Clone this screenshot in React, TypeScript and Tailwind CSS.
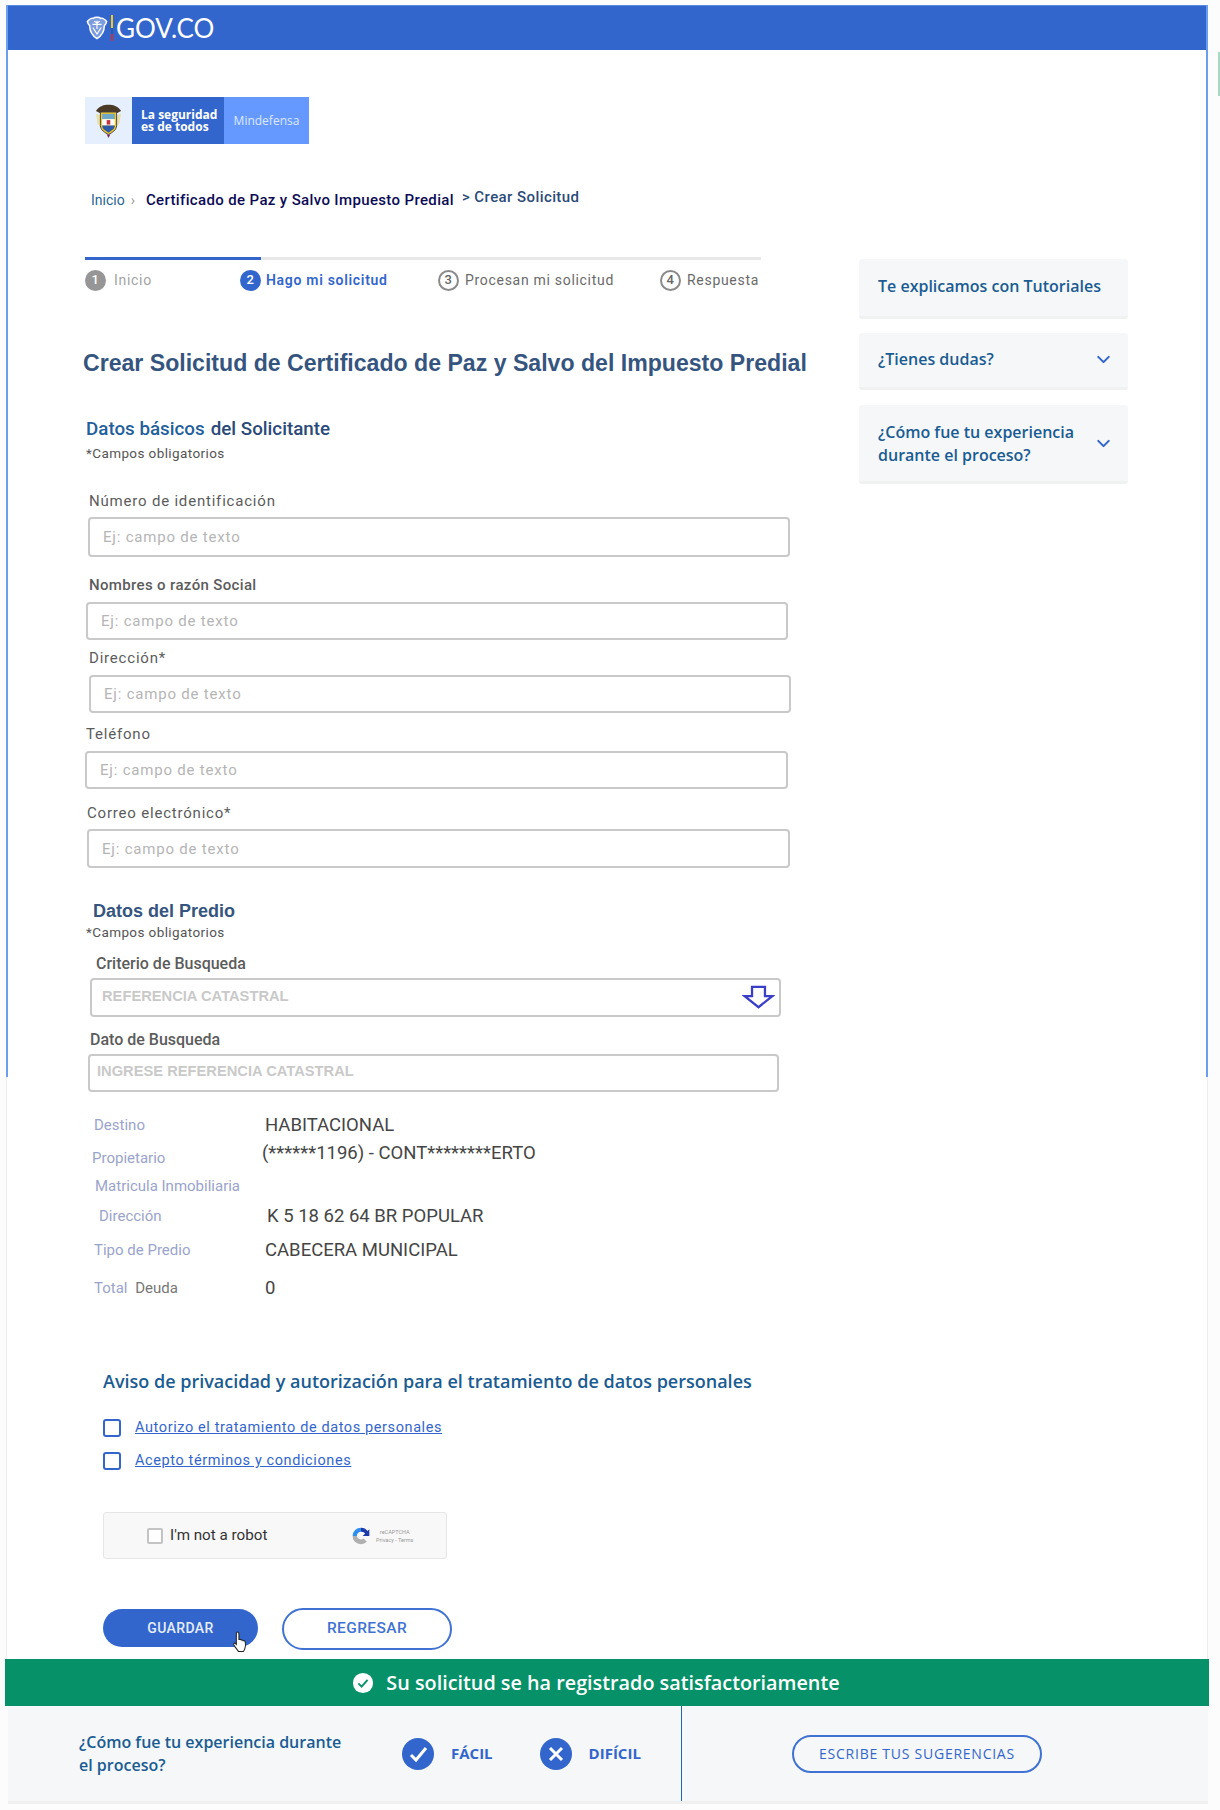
import React from 'react';
import { ChevronDown } from 'lucide-react';

const sans = 'font-["Roboto",sans-serif]';

function Shield({ className = '' }: { className?: string }) {
  return (
    <svg viewBox="0 0 24 26" className={className} fill="none" stroke="#fff">
      <path d="M1.500 6C4 3 6 1.500 8 2.500c1-1.500 7-1.500 8 0C18 1.500 20 3 22.500 6 22 8.500 21 9.500 20 10.500c0 7-4 11.500-8 14-4-2.500-8-7-8-14-1-1-2-2-2.500-4.500z" fill="#e8eef9" fillOpacity="0.4" strokeWidth="1.600" />
      <path d="M7 9h10M7.500 12.500l4.500 7 4.500-7M12 5v9M9 5.500l3 2 3-2" strokeWidth="1.300" />
    </svg>
  );
}

function Crest() {
  return (
    <svg viewBox="0 0 30 40" className="h-[36px] w-[29px]">
      <path d="M1 9c4-6 9-7 14-7s10 1 14 7l-6 3H7z" fill="#4a3a25" />
      <path d="M1 12l5 2v12l-3-3zM29 12l-5 2v12l3-3z" fill="#e8dfa8" />
      <path d="M6 10h18v15c0 5-5 8-9 10-4-2-9-5-9-10z" fill="#f3c71e" stroke="#3a3a55" strokeWidth="1" />
      <rect x="8" y="12" width="14" height="6" fill="#6fa8c8" />
      <rect x="8" y="18" width="14" height="7" fill="#fff" />
      <path d="M13 19h4v5h-4z" fill="#c8303a" />
      <path d="M8 25h14c0 4-4 6-7 8-3-2-7-4-7-8z" fill="#2d5aa8" />
      <path d="M13 35l2 4 2-4z" fill="#7a2a50" />
    </svg>
  );
}

function StepBadge({ n, variant }: { n: number; variant: 'done' | 'active' | 'idle' }) {
  const tone =
    variant === 'done'
      ? 'bg-[#969696] text-white'
      : variant === 'active'
        ? 'bg-[#3366cc] text-white'
        : 'border-2 border-[#8a8a8a] text-[#666]';
  return (
    <span className={`flex h-[21px] w-[21px] shrink-0 items-center justify-center rounded-full text-[13px] font-medium ${tone}`}>
      {n}
    </span>
  );
}

function SideCard({ children, chevron = false, className = '' }: { children: React.ReactNode; chevron?: boolean; className?: string }) {
  return (
    <div className={`flex w-[269px] items-center justify-between rounded-[3px] border-b-[3px] border-[#f0f1f1] bg-[#f5f7f9] pl-[19px] pr-[14px] font-["Open_Sans",sans-serif] text-[16px] leading-[23px] font-semibold text-[#1a5c92] ${className}`}>
      <div>{children}</div>
      {chevron && <ChevronDown className="h-[21px] w-[21px] text-[#3366cc]" strokeWidth={2.4} />}
    </div>
  );
}

function TextField({ label, wrap, labelClass, inputClass, placeholder = 'Ej: campo de texto' }: {
  label: string;
  wrap: string;
  labelClass: string;
  inputClass: string;
  placeholder?: string;
}) {
  return (
    <div className={wrap}>
      <div className={`${sans} text-[15px] leading-[18px] text-[#5c5c5c] ${labelClass}`}>{label}</div>
      <div className={`flex items-center rounded-[4px] border-2 border-[#c9c9c9] bg-white pl-[13px] pt-[1px] ${sans} text-[15px] tracking-[0.8px] text-[#b5b5b5] ${inputClass}`}>
        {placeholder}
      </div>
    </div>
  );
}

function DataRow({ label, value, wrap, labelClass, valueClass }: { label: React.ReactNode; value?: string; wrap: string; labelClass: string; valueClass?: string }) {
  return (
    <div className={`flex ${sans} ${wrap}`}>
      <div className={`text-[15px] text-[#9aa4cb] ${labelClass}`}>{label}</div>
      {value && <div className={`text-[18.500px] text-[#454545] ${valueClass}`}>{value}</div>}
    </div>
  );
}

function Consent({ text, wrap }: { text: string; wrap: string }) {
  return (
    <div className={`flex items-center ${wrap}`}>
      <span className="h-[18px] w-[18px] rounded-[3px] border-[2.5px] border-[#3366cc] bg-white" />
      <a className={`ml-[14px] ${sans} text-[14.500px] leading-[18px] tracking-[0.6px] text-[#3366cc] underline`}>{text}</a>
    </div>
  );
}

function Recaptcha() {
  return (
    <svg viewBox="0 0 24 24" className="h-[20px] w-[20px]">
      <path d="M12 2a10 10 0 0 0-10 10h5a5 5 0 0 1 5-5z" fill="#2e8fef" />
      <path d="M12 2a10 10 0 0 1 8 4l2-2v8h-8l3-3a5 5 0 0 0-5-2z" fill="#1c3aa9" />
      <path d="M2 12a10 10 0 0 0 17 7l-4-4a5 5 0 0 1-8-3H2z" fill="#b0b0b0" />
    </svg>
  );
}

function HandCursor() {
  return (
    <svg viewBox="0 0 16 22" className="pointer-events-none absolute left-[129px] top-[21px] h-[23px] w-[17px]">
      <path
        d="M5 2c1 0 1.500.6 1.500 1.500V9l1-.2c.8 0 1 .4 1.200.8.800-.3 1.600 0 1.800.7.800-.3 1.800.1 2 1 .5 2 .5 4-.2 6-.4 1.300-1 2.700-1.500 3.200H6c-1.200-1.500-2.500-3.500-4-5.500-.7-1-.8-1.800-.2-2.300.6-.4 1.300 0 2.200 1V3.500C4 2.600 4.300 2 5 2z"
        fill="#fff"
        stroke="#222"
        strokeWidth="1"
      />
    </svg>
  );
}

export default function App() {
  return (
    <div className="relative h-[1810px] w-[1220px] overflow-hidden bg-[#fcfcfc] pt-[5px]">
      <div className="absolute left-[1218px] top-[52px] h-[44px] w-[2px] bg-[#a8d8c3]" />
      <div className="relative ml-[6px] h-[1654px] w-[1202px] border-x border-[#ededed] bg-white">
        {/* blue edges only run along the top part of the frame */}
        <div className="absolute -left-px top-0 h-[1072px] w-[2px] bg-[#6b9fee]" />
        <div className="absolute -right-px top-0 h-[1072px] w-[2px] bg-[#6b9fee]" />

        <header className="flex h-[45px] items-center border-t border-[#5a8be0] bg-[#3366cc] pl-[79px]">
          <Shield className="h-[24px] w-[22px]" />
          <span className="ml-[3px] h-[26px] w-[2px] bg-[linear-gradient(#f3c71e_0_50%,#2d5aa8_50%_75%,#c8303a_75%)]" />
          <span className='ml-[3px] font-["Lato",sans-serif] text-[26px] leading-none text-white'>GOV.CO</span>
        </header>

        <div className="ml-[78px] mt-[47px] flex h-[47px] w-[224px] font-['Open_Sans',sans-serif] text-white">
          <div className="flex w-[47px] items-center justify-center bg-[#e6effd]"><Crest /></div>
          <div className="flex w-[92px] flex-col justify-center bg-[#3366cc] pl-[9px] text-[12px] leading-[12px] font-bold">
            <span>La seguridad</span>
            <span>es de todos</span>
          </div>
          <div className="flex w-[85px] items-center justify-center bg-[#6699ff] text-[12px] text-[#dce8ff]">Mindefensa</div>
        </div>

        <div className="ml-[84px] mt-[43px] flex h-[26px] items-start">
          <span className={`${sans} mt-[3px] text-[14px] text-[#2a6496]`}>Inicio</span>
          <span className={`${sans} ml-[6px] mt-[3px] text-[14px] text-[#999]`}>›</span>
          <span className={`ml-[11px] mt-[2px] ${sans} text-[15px] font-medium tracking-[0.36px] text-[#0b0b55]`}>Certificado de Paz y Salvo Impuesto Predial</span>
          <span className={`ml-[8px] -mt-[1px] ${sans} text-[15px] font-medium tracking-[0.42px] text-[#2b4a78]`}>&gt; Crear Solicitud</span>
        </div>

        <div className="ml-[78px] mt-[44px] flex items-start">
          <div className="w-[774px] shrink-0">
            <div className="h-[3px] w-[676px] bg-[#e8e8e8]">
              <div className="h-[3px] w-[176px] bg-[#3366cc]" />
            </div>
            <div className={`mt-[8px] flex h-[24px] items-center ${sans} text-[14px] tracking-[0.7px]`}>
              <div className="flex w-[155px] items-center gap-[8px] text-[#a3a3a3]"><StepBadge n={1} variant="done" />Inicio</div>
              <div className="flex w-[198px] items-center gap-[5px] font-semibold text-[#3366cc]"><StepBadge n={2} variant="active" />Hago mi solicitud</div>
              <div className="flex w-[222px] items-center gap-[6px] text-[#6a6a6a]"><StepBadge n={3} variant="idle" />Procesan mi solicitud</div>
              <div className="flex items-center gap-[6px] text-[#6a6a6a]"><StepBadge n={4} variant="idle" />Respuesta</div>
            </div>

            <h1 className='-ml-[2px] mt-[56px] font-["Liberation_Sans",sans-serif] text-[23.100px] leading-[30px] font-bold whitespace-nowrap text-[#35557f]'>
              Crear Solicitud de Certificado de Paz y Salvo del Impuesto Predial
            </h1>

            <div className={`ml-[1px] mt-[39px] ${sans} text-[18.800px] leading-[24px] font-medium`}>
              <span className="text-[#23609b]">Datos básicos</span>
              <span className="ml-[6px] text-[#2b4a78]">del Solicitante</span>
            </div>
            <div className={`ml-[1px] mt-[3px] ${sans} text-[13.500px] leading-[18px] tracking-[0.4px] text-[#555]`}>*Campos obligatorios</div>

            <TextField label="Número de identificación" wrap="ml-[3px] mt-[30px]" labelClass="ml-[1px] mb-[7px] tracking-[0.8px]" inputClass="h-[40px] w-[702px]" />
            <TextField label="Nombres o razón Social" wrap="ml-[1px] mt-[19px]" labelClass="ml-[3px] mb-[8px] font-medium tracking-[0.35px]" inputClass="h-[38px] w-[702px]" />
            <TextField label="Dirección*" wrap="ml-[4px] mt-[9px]" labelClass="mb-[8px] tracking-[0.8px]" inputClass="h-[38px] w-[702px]" />
            <TextField label="Teléfono" wrap="mt-[12px]" labelClass="ml-[1px] mb-[8px] tracking-[0.8px]" inputClass="h-[38px] w-[703px]" />
            <TextField label="Correo electrónico*" wrap="ml-[2px] mt-[15px]" labelClass="mb-[7px] tracking-[0.8px]" inputClass="h-[39px] w-[703px]" />

            <div className='ml-[8px] mt-[31px] font-["Liberation_Sans",sans-serif] text-[18px] leading-[24px] font-bold text-[#35557f]'>Datos del Predio</div>
            <div className={`ml-[1px] mt-[1px] ${sans} text-[13.500px] leading-[16px] tracking-[0.4px] text-[#555]`}>*Campos obligatorios</div>

            <div className="ml-[5px] mt-[15px]">
              <div className={`ml-[6px] mb-[5px] ${sans} text-[16px] leading-[18px] font-medium text-[#5c5c5c]`}>Criterio de Busqueda</div>
              <div className='flex h-[39px] w-[691px] items-start justify-between rounded-[4px] border-2 border-[#c9c9c9] pl-[10px] pr-[4px] font-["Liberation_Sans",sans-serif] text-[14.700px] font-bold text-[#c9c9c9]'>
                <span className="mt-[5px]">REFERENCIA CATASTRAL</span>
                <svg viewBox="0 0 34 26" className="mt-[5px] h-[24px] w-[33px]">
                  <path d="M10 2h14v10h8L17 24 2 12h8z" fill="#fff" stroke="#3a3fc8" strokeWidth="2.500" />
                </svg>
              </div>
            </div>
            <div className="ml-[3px] mt-[14px]">
              <div className={`ml-[2px] mb-[5px] ${sans} text-[16px] leading-[18px] font-medium text-[#5c5c5c]`}>Dato de Busqueda</div>
              <div className='flex h-[38px] w-[691px] items-start rounded-[4px] border-2 border-[#c9c9c9] pl-[7px] font-["Liberation_Sans",sans-serif] text-[14.700px] font-bold text-[#c9c9c9]'>
                <span className="mt-[4px]">INGRESE REFERENCIA CATASTRAL</span>
              </div>
            </div>
          </div>

          <aside className="mt-[2px] shrink-0">
            <SideCard className="h-[60px] pb-[3px]">Te explicamos con Tutoriales</SideCard>
            <SideCard chevron className="mt-[14px] h-[57px] pb-[1px]">¿Tienes dudas?</SideCard>
            <SideCard chevron className="mt-[15px] h-[79px] pt-[1px]">
              ¿Cómo fue tu experiencia
              <br />
              durante el proceso?
            </SideCard>
          </aside>
        </div>

        <DataRow label="Destino" value="HABITACIONAL" wrap="mt-[21px] ml-[87px] h-[24px] items-center" labelClass="w-[171px]" valueClass="mt-[2px]" />
        <DataRow label="Propietario" value="(******1196) - CONT********ERTO" wrap="mt-[2px] ml-[85px] h-[32px] items-start" labelClass="w-[170px] mt-[8px]" valueClass="mt-[1px]" />
        <DataRow label="Matricula Inmobiliaria" wrap="mt-[3px] ml-[88px] h-[24px] items-center" labelClass="" />
        <DataRow label="Dirección" value="K 5 18 62 64 BR POPULAR" wrap="mt-[6px] ml-[92px] h-[24px] items-center" labelClass="w-[168px]" valueClass="mt-[1px]" />
        <DataRow label="Tipo de Predio" value="CABECERA MUNICIPAL" wrap="mt-[10px] ml-[87px] h-[24px] items-center" labelClass="w-[171px]" valueClass="mt-[1px]" />
        <DataRow
          label={<>Total <span className="ml-[4px] text-[#777]">Deuda</span></>}
          value="0"
          wrap="mt-[14px] ml-[87px] h-[24px] items-center"
          labelClass="w-[171px]"
          valueClass="mt-[1px]"
        />

        <h2 className='ml-[96px] mt-[69px] font-["Open_Sans",sans-serif] text-[18px] leading-[24px] font-semibold whitespace-nowrap text-[#1a5c92]'>
          Aviso de privacidad y autorización para el tratamiento de datos personales
        </h2>
        <Consent text="Autorizo el tratamiento de datos personales" wrap="ml-[96px] mt-[26px]" />
        <Consent text="Acepto términos y condiciones" wrap="ml-[96px] mt-[15px]" />

        <div className={`ml-[96px] mt-[42px] flex h-[47px] w-[344px] items-center rounded-[3px] border border-[#e6e6e6] bg-[#f8f8f8] pl-[43px] ${sans}`}>
          <span className="h-[16px] w-[16px] rounded-[2px] border-2 border-[#c4c4c4] bg-white" />
          <span className="ml-[7px] w-[181px] text-[15.200px] text-[#333]">I'm not a robot</span>
          <Recaptcha />
          <span className="ml-[5px] flex flex-col items-center text-[5.500px] leading-[8px] text-[#999]">
            <span>reCAPTCHA</span>
            <span>Privacy - Terms</span>
          </span>
        </div>

        <div className="ml-[96px] mt-[50px] flex items-start">
          <div className={`relative flex h-[38px] w-[155px] items-center justify-center rounded-full bg-[#3366cc] ${sans} text-[14px] font-medium tracking-[0.4px] text-[#e6edfa]`}>
            GUARDAR
            <HandCursor />
          </div>
          <div className={`ml-[24px] -mt-[1px] flex h-[42px] w-[170px] items-center justify-center rounded-full border-2 border-[#3f72d2] bg-white ${sans} text-[15.500px] font-medium tracking-[0.4px] text-[#3f72d2]`}>
            REGRESAR
          </div>
        </div>
      </div>

      <div className="ml-[5px] flex h-[47px] w-[1204px] items-center justify-center gap-[12px] bg-[#069169] pr-[22px] font-['Open_Sans',sans-serif] text-[19.800px] font-semibold text-white">
        <svg viewBox="0 0 24 24" className="h-[22px] w-[22px]">
          <circle cx="12" cy="12" r="11" fill="#fff" />
          <path d="M7 12.500l3.500 3.500L17 8.500" fill="none" stroke="#069169" strokeWidth="2" />
        </svg>
        Su solicitud se ha registrado satisfactoriamente
      </div>

      <div className="ml-[8px] flex h-[98px] w-[1200px] border-b-[3px] border-[#f0f0f0] bg-[#f5f7f9] font-['Open_Sans',sans-serif]">
        <div className="flex w-[674px] items-center border-r border-[#1f6ca8] pl-[71px]">
          <div className="w-[323px] text-[16px] leading-[23px] font-semibold whitespace-nowrap text-[#1a5c92]">
            ¿Cómo fue tu experiencia durante<br />el proceso?
          </div>
          <svg viewBox="0 0 32 32" className="h-[32px] w-[32px]">
            <circle cx="16" cy="16" r="16" fill="#3366cc" />
            <path d="M9 17l5 5 10-12" fill="none" stroke="#fff" strokeWidth="3" />
          </svg>
          <span className="ml-[17px] text-[15px] font-bold text-[#3366cc]">FÁCIL</span>
          <svg viewBox="0 0 32 32" className="ml-[47px] h-[32px] w-[32px]">
            <circle cx="16" cy="16" r="16" fill="#3366cc" />
            <path d="M10 10l12 12M22 10L10 22" fill="none" stroke="#fff" strokeWidth="3" />
          </svg>
          <span className="ml-[17px] text-[15px] font-bold text-[#3366cc]">DIFÍCIL</span>
        </div>
        <div className="flex flex-1 items-center pl-[110px]">
          <div className="flex h-[38px] w-[250px] items-center justify-center rounded-full border-2 border-[#3f72d2] text-[14px] font-medium tracking-[0.75px] text-[#3366cc]">
            ESCRIBE TUS SUGERENCIAS
          </div>
        </div>
      </div>
    </div>
  );
}
